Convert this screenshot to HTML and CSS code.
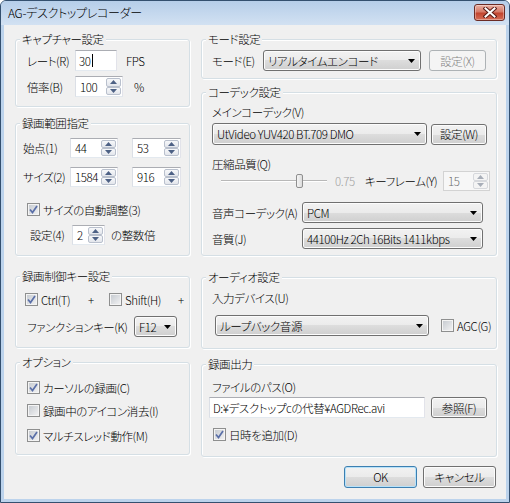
FILE: index.html
```html
<!DOCTYPE html>
<html lang="ja">
<head>
<meta charset="utf-8">
<title>AG-デスクトップレコーダー</title>
<link rel="stylesheet" href="styles.css">
</head>
<body>
<div class="window">
  <div class="titlebar">
    <span class="title">AG-デスクトップレコーダー</span>
    <span class="close"><svg width="14" height="11" viewBox="0 0 14 11"><path d="M2.5 1.5 L11.5 9.5 M11.5 1.5 L2.5 9.5" stroke="#5a1c16" stroke-width="4" stroke-linecap="square"/><path d="M2.5 1.5 L11.5 9.5 M11.5 1.5 L2.5 9.5" stroke="#fff" stroke-width="2" stroke-linecap="square"/></svg></span>
  </div>
  <div class="client">
    <div class="col col-left">
      <div class="group g-cap">
        <span class="gtitle">キャプチャー設定</span>
        <div class="row h21 mt4">
          <span class="lbl ml11 w48">レート(R)</span>
          <span class="edit w42">30<span class="caret"></span></span>
          <span class="ml9">FPS</span>
        </div>
        <div class="row h21 mt5">
          <span class="lbl ml11 w48">倍率(B)</span>
          <span class="spin w48"><span class="val">100</span><span class="sbtns"><span class="sb"><svg width="7" height="4" viewBox="0 0 7 4"><path d="M0 4h7L3.5 0z" fill="#4d6185"/></svg></span><span class="sb"><svg width="7" height="4" viewBox="0 0 7 4"><path d="M0 0h7L3.5 4z" fill="#4d6185"/></svg></span></span></span>
          <span class="ml11">%</span>
        </div>
      </div>

      <div class="group g-range">
        <span class="gtitle">録画範囲指定</span>
        <div class="row h20 mt8">
          <span class="lbl ml7 w47">始点(1)</span>
          <span class="spin w48"><span class="val">44</span><span class="sbtns"><span class="sb"><svg width="7" height="4" viewBox="0 0 7 4"><path d="M0 4h7L3.5 0z" fill="#4d6185"/></svg></span><span class="sb"><svg width="7" height="4" viewBox="0 0 7 4"><path d="M0 0h7L3.5 4z" fill="#4d6185"/></svg></span></span></span>
          <span class="spin w49 ml14"><span class="val">53</span><span class="sbtns"><span class="sb"><svg width="7" height="4" viewBox="0 0 7 4"><path d="M0 4h7L3.5 0z" fill="#4d6185"/></svg></span><span class="sb"><svg width="7" height="4" viewBox="0 0 7 4"><path d="M0 0h7L3.5 4z" fill="#4d6185"/></svg></span></span></span>
        </div>
        <div class="row h20 mt9">
          <span class="lbl ml7 w47">サイズ(2)</span>
          <span class="spin w48"><span class="val">1584</span><span class="sbtns"><span class="sb"><svg width="7" height="4" viewBox="0 0 7 4"><path d="M0 4h7L3.5 0z" fill="#4d6185"/></svg></span><span class="sb"><svg width="7" height="4" viewBox="0 0 7 4"><path d="M0 0h7L3.5 4z" fill="#4d6185"/></svg></span></span></span>
          <span class="spin w49 ml14"><span class="val">916</span><span class="sbtns"><span class="sb"><svg width="7" height="4" viewBox="0 0 7 4"><path d="M0 4h7L3.5 0z" fill="#4d6185"/></svg></span><span class="sb"><svg width="7" height="4" viewBox="0 0 7 4"><path d="M0 0h7L3.5 4z" fill="#4d6185"/></svg></span></span></span>
        </div>
        <div class="row h13 mt16">
          <span class="cb ml11 on"><svg width="11" height="11" viewBox="0 0 11 11"><path d="M2 5.5 L4.5 8.5 L9 2" fill="none" stroke="#5a6fa8" stroke-width="1.7"/></svg></span>
          <span class="ml3">サイズの自動調整(3)</span>
        </div>
        <div class="row h20 mt9">
          <span class="lbl ml14 w42">設定(4)</span>
          <span class="spin w33"><span class="val">2</span><span class="sbtns"><span class="sb"><svg width="7" height="4" viewBox="0 0 7 4"><path d="M0 4h7L3.5 0z" fill="#4d6185"/></svg></span><span class="sb"><svg width="7" height="4" viewBox="0 0 7 4"><path d="M0 0h7L3.5 4z" fill="#4d6185"/></svg></span></span></span>
          <span class="ml6">の整数倍</span>
        </div>
      </div>

      <div class="group g-key">
        <span class="gtitle">録画制御キー設定</span>
        <div class="row h13 mt10">
          <span class="cb ml9 on"><svg width="11" height="11" viewBox="0 0 11 11"><path d="M2 5.5 L4.5 8.5 L9 2" fill="none" stroke="#5a6fa8" stroke-width="1.7"/></svg></span>
          <span class="ml3 w47">Ctrl(T)</span>
          <span class="w21">+</span>
          <span class="cb"></span>
          <span class="ml3 w53">Shift(H)</span>
          <span>+</span>
        </div>
        <div class="row h21 mt10">
          <span class="lbl ml11 w107">ファンクションキー(K)</span>
          <span class="combo w43"><span>F12</span><svg width="7" height="4" viewBox="0 0 7 4"><path d="M0 0h7L3.5 4z" fill="#000"/></svg></span>
        </div>
      </div>

      <div class="group g-opt">
        <span class="gtitle">オプション</span>
        <div class="row h13 mt12">
          <span class="cb ml11 on"><svg width="11" height="11" viewBox="0 0 11 11"><path d="M2 5.5 L4.5 8.5 L9 2" fill="none" stroke="#5a6fa8" stroke-width="1.7"/></svg></span>
          <span class="ml3">カーソルの録画(C)</span>
        </div>
        <div class="row h13 mt10">
          <span class="cb ml11"></span>
          <span class="ml3">録画中のアイコン消去(I)</span>
        </div>
        <div class="row h13 mt12">
          <span class="cb ml11 on"><svg width="11" height="11" viewBox="0 0 11 11"><path d="M2 5.5 L4.5 8.5 L9 2" fill="none" stroke="#5a6fa8" stroke-width="1.7"/></svg></span>
          <span class="ml3">マルチスレッド動作(M)</span>
        </div>
      </div>
    </div>

    <div class="col col-right">
      <div class="group r-mode">
        <span class="gtitle">モード設定</span>
        <div class="row h21 mt4">
          <span class="lbl ml10 w51">モード(E)</span>
          <span class="combo w158"><span>リアルタイムエンコード</span><svg width="7" height="4" viewBox="0 0 7 4"><path d="M0 0h7L3.5 4z" fill="#000"/></svg></span>
          <span class="btn dis w57 ml8">設定(X)</span>
        </div>
      </div>

      <div class="group r-codec">
        <span class="gtitle">コーデック設定</span>
        <div class="row h14 mt6"><span class="ml10">メインコーデック(V)</span></div>
        <div class="row h22 mt4">
          <span class="combo w215 h22 ml10"><span>UtVideo YUV420 BT.709 DMO</span><svg width="7" height="4" viewBox="0 0 7 4"><path d="M0 0h7L3.5 4z" fill="#000"/></svg></span>
          <span class="btn w56 ml4">設定(W)</span>
        </div>
        <div class="row h14 mt12"><span class="ml10">圧縮品質(Q)</span></div>
        <div class="row h20">
          <span class="slider ml19"><span class="track"></span><span class="thumb"></span></span>
          <span class="gray ml8 w30">0.75</span>
          <span class="w78">キーフレーム(Y)</span>
          <span class="spin dis w47"><span class="val">15</span><span class="sbtns"><span class="sb"><svg width="7" height="4" viewBox="0 0 7 4"><path d="M0 4h7L3.5 0z" fill="#a8aeb8"/></svg></span><span class="sb"><svg width="7" height="4" viewBox="0 0 7 4"><path d="M0 0h7L3.5 4z" fill="#a8aeb8"/></svg></span></span></span>
        </div>
        <div class="row h21 mt11">
          <span class="lbl ml10 w90">音声コーデック(A)</span>
          <span class="combo w181"><span>PCM</span><svg width="7" height="4" viewBox="0 0 7 4"><path d="M0 0h7L3.5 4z" fill="#000"/></svg></span>
        </div>
        <div class="row h21 mt5">
          <span class="lbl ml10 w90">音質(J)</span>
          <span class="combo w181"><span>44100Hz 2Ch 16Bits 1411kbps</span><svg width="7" height="4" viewBox="0 0 7 4"><path d="M0 0h7L3.5 4z" fill="#000"/></svg></span>
        </div>
      </div>

      <div class="group r-audio">
        <span class="gtitle">オーディオ設定</span>
        <div class="row h14 mt7"><span class="ml10">入力デバイス(U)</span></div>
        <div class="row h21 mt10">
          <span class="combo w214 ml13"><span>ループバック音源</span><svg width="7" height="4" viewBox="0 0 7 4"><path d="M0 0h7L3.5 4z" fill="#000"/></svg></span>
          <span class="cb ml12"></span>
          <span class="ml3">AGC(G)</span>
        </div>
      </div>

      <div class="group r-out">
        <span class="gtitle">録画出力</span>
        <div class="row h14 mt9"><span class="ml10">ファイルのパス(O)</span></div>
        <div class="row h21 mt3">
          <span class="edit w216 ml7">D:¥デスクトップcの代替¥AGDRec.avi</span>
          <span class="btn w56 ml6">参照(F)</span>
        </div>
        <div class="row h13 mt10">
          <span class="cb ml11 on"><svg width="11" height="11" viewBox="0 0 11 11"><path d="M2 5.5 L4.5 8.5 L9 2" fill="none" stroke="#5a6fa8" stroke-width="1.7"/></svg></span>
          <span class="ml3">日時を追加(D)</span>
        </div>
      </div>

      <div class="buttons">
        <span class="btn def w73 h22">OK</span>
        <span class="btn w73 h22">キャンセル</span>
      </div>
    </div>
  </div>
</div>
</body>
</html>
```

FILE: styles.css
```css
* { box-sizing: border-box; }
html, body { margin: 0; padding: 0; }
body {
  width: 510px;
  height: 503px;
  overflow: hidden;
  background: #ffffff;
  font-family: "Noto Sans CJK JP", "Noto Sans", sans-serif;
  font-size: 11.5px;
  font-weight: 300;
  letter-spacing: -0.4px;
  color: #000;
  font-feature-settings: "palt" 1;
}
.window {
  width: 510px;
  height: 503px;
  border: 1px solid #34506f;
  border-radius: 6px 6px 0 0;
  background: #bcd3ec;
  display: flex;
  flex-direction: column;
}
.titlebar {
  height: 24px;
  flex: none;
  display: flex;
  align-items: flex-start;
  justify-content: space-between;
  background: linear-gradient(#b6cee9, #d2e1f2);
  border-radius: 5px 5px 0 0;
}
.title { margin: 5px 0 0 7px; line-height: 14px; white-space: nowrap; font-size: 12px; letter-spacing: -0.3px; }
.close {
  width: 31px;
  height: 17px;
  margin: 3px 4px 0 0;
  border: 1px solid #6b2b24;
  border-radius: 3px;
  background: linear-gradient(#eab0a2, #d67a68 45%, #c2452f 55%, #d66d57);
  box-shadow: inset 0 0 0 1px rgba(255,255,255,0.35);
  display: flex;
  align-items: center;
  justify-content: center;
}
.client {
  flex: 1;
  margin: 0 3px 3px 3px;
  background: #f0f0f0;
  display: flex;
  gap: 11px;
  padding: 14px 0 0 11px;
}
.col { display: flex; flex-direction: column; flex: none; }
.col-left { width: 175px; }
.col-right { width: 296px; }

.group {
  flex: none;
  border: 1px solid #d5dfe5;
  border-radius: 3px;
  box-shadow: inset 1px 1px 0 #fff, 1px 1px 0 #fff;
}
.gtitle {
  display: block;
  width: fit-content;
  height: 14px;
  line-height: 14px;
  margin: -8px 0 0 4px;
  padding: 0 2px;
  background: #f0f0f0;
  white-space: nowrap;
}
.g-cap { height: 68px; }
.g-range { height: 133px; margin-top: 16px; }
.g-key { height: 72px; margin-top: 20px; }
.g-opt { height: 93px; margin-top: 14px; }
.r-mode { height: 40px; }
.r-codec { height: 164px; margin-top: 13px; }
.r-audio { height: 72px; margin-top: 21px; }
.r-out { height: 93px; margin-top: 15px; }

.buttons {
  display: flex;
  justify-content: flex-end;
  gap: 6px;
  margin-top: 9px;
  padding-right: 1px;
}

.row { display: flex; align-items: center; flex: none; white-space: nowrap; }
.lbl { flex: none; }
.gray { color: #a0a0a0; }

.h13 { height: 13px; }
.h14 { height: 14px; }
.h20 { height: 20px; }
.h21 { height: 21px; }
.h22 { height: 22px !important; }

.mt3 { margin-top: 3px; } .mt4 { margin-top: 4px; } .mt5 { margin-top: 5px; }
.mt6 { margin-top: 6px; } .mt7 { margin-top: 7px; } .mt8 { margin-top: 8px; }
.mt9 { margin-top: 9px; } .mt10 { margin-top: 10px; } .mt11 { margin-top: 11px; }
.mt12 { margin-top: 12px; } .mt16 { margin-top: 16px; }

.ml3 { margin-left: 3px; } .ml4 { margin-left: 4px; } .ml6 { margin-left: 6px; }
.ml7 { margin-left: 7px; } .ml8 { margin-left: 8px; } .ml9 { margin-left: 9px; }
.ml10 { margin-left: 10px; } .ml11 { margin-left: 11px; } .ml12 { margin-left: 12px; }
.ml13 { margin-left: 13px; } .ml14 { margin-left: 14px; } .ml19 { margin-left: 19px; }

.w21 { width: 21px; } .w30 { width: 30px; } .w33 { width: 33px; } .w42 { width: 42px; }
.w43 { width: 43px; } .w47 { width: 47px; } .w48 { width: 48px; } .w49 { width: 49px; }
.w50 { width: 50px; } .w51 { width: 51px; } .w53 { width: 53px; } .w56 { width: 56px; }
.w57 { width: 57px; } .w73 { width: 73px; } .w78 { width: 78px; } .w90 { width: 90px; }
.w107 { width: 107px; } .w158 { width: 158px; } .w181 { width: 181px; } .w214 { width: 214px; }
.w215 { width: 215px; } .w216 { width: 216px; }

.edit, .spin {
  flex: none;
  height: 100%;
  border: 1px solid;
  border-color: #abadb3 #e2e3ea #e3e9ef #dbdfe6;
  background: #fff;
  display: flex;
  align-items: center;
  overflow: hidden;
}
.edit { padding-left: 3px; }
.caret { display: inline-block; width: 1px; height: 13px; background: #000; margin-left: 1px; }
.spin { justify-content: space-between; padding: 1px; }
.spin .val { padding-left: 3px; }
.spin.dis { border-color: #d3d3d3; background: #f7f7f7; color: #6d6d6d; }
.sbtns { width: 15px; height: 100%; display: flex; flex-direction: column; flex: none; }
.sb {
  flex: 1;
  border: 1px solid #b9c0cd;
  border-radius: 2px;
  background: linear-gradient(#f7f8fa, #e3e6ec);
  display: flex;
  align-items: center;
  justify-content: center;
}
.spin.dis .sb { border-color: #d6d8dc; background: #f4f4f4; }

.combo, .btn {
  flex: none;
  height: 21px;
  border: 1px solid #707070;
  border-radius: 3px;
  background: linear-gradient(#f2f2f2 0%, #ebebeb 50%, #dddddd 50%, #cfcfcf 100%);
  box-shadow: inset 0 0 0 1px #fcfcfc;
}
.combo {
  display: flex;
  align-items: center;
  justify-content: space-between;
  padding: 0 5px 0 4px;
  overflow: hidden;
}
.btn { display: flex; align-items: center; justify-content: center; }
.btn.dis { border-color: #adb2b5; background: #f4f4f4; color: #838383; box-shadow: none; }
.btn.def { border-color: #3c7fb1; box-shadow: inset 0 0 0 1px #b8e2f9; }

.cb {
  flex: none;
  width: 13px;
  height: 13px;
  border: 1px solid #8e8f8f;
  background: linear-gradient(135deg, #c3c8ce, #f4f4f5);
  box-shadow: inset 0 0 0 1px #f4f4f4;
  display: flex;
  align-items: center;
  justify-content: center;
}

.slider { flex: none; position: relative; width: 106px; height: 20px; }
.track {
  position: absolute;
  left: 0;
  right: 0;
  top: 9px;
  height: 2px;
  border-top: 1px solid #b8b8b8;
  border-bottom: 1px solid #ffffff;
}
.thumb {
  position: absolute;
  left: 75px;
  top: 3px;
  width: 7px;
  height: 14px;
  border: 1px solid #8f8f8f;
  border-radius: 2px;
  background: linear-gradient(90deg, #f5f5f5, #dcdcdc);
}
```
